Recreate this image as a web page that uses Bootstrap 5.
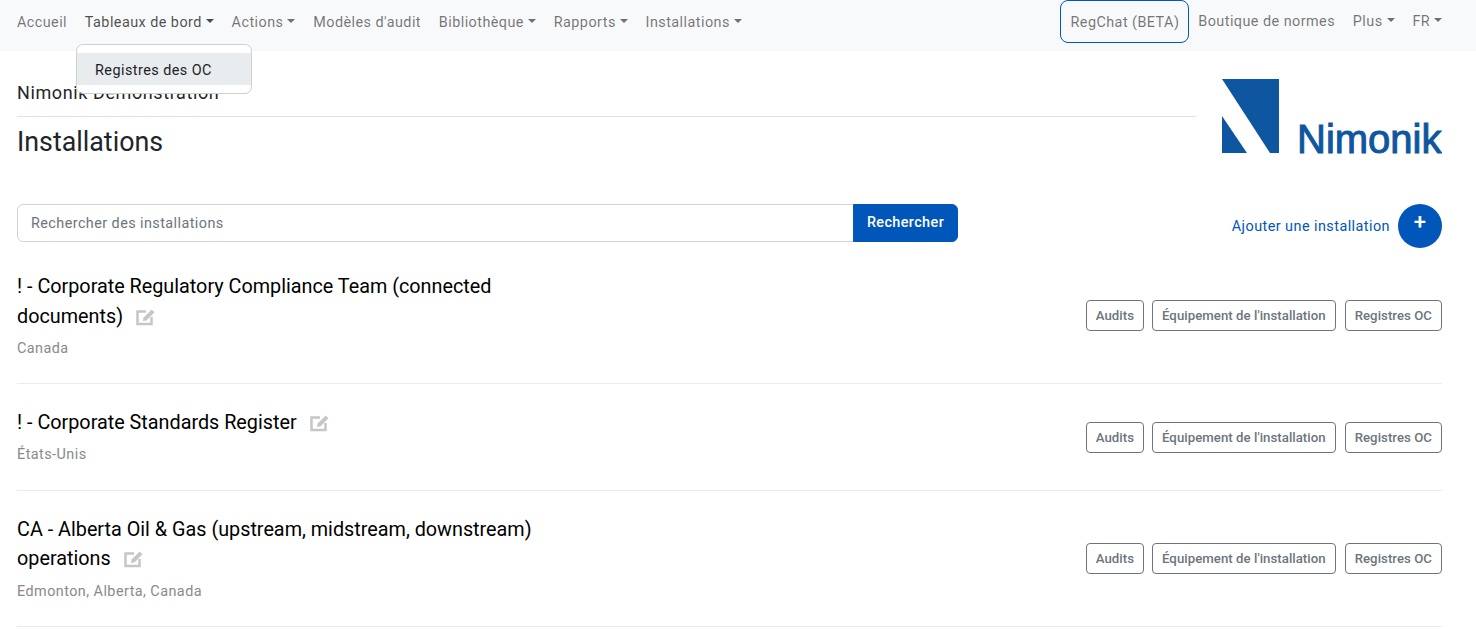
<!DOCTYPE html>
<html lang="fr">
<head>
<meta charset="utf-8">
<title>Installations</title>
<link href="https://cdn.jsdelivr.net/npm/bootstrap@5.3.0/dist/css/bootstrap.min.css" rel="stylesheet">
<style>
html,body{height:629px;overflow:hidden}
body{font-family:Roboto,"Liberation Sans",sans-serif;font-size:14.4px;letter-spacing:.45px;color:#212529;background:#fff}
.topbar{height:51px;padding:0 25px 0 8px;align-items:flex-start}
.topbar .navbar-nav .nav-link{padding:0 8.9px;line-height:46px;color:rgba(0,0,0,.55);font-size:14.4px}
.topbar .navbar-nav .dropdown-toggle.is-open{color:rgba(0,0,0,.7)}
.topbar .dropdown-toggle::after{margin-left:4px}
.topbar .navbar-nav .chat-link{border:1px solid #0056b9;border-radius:8px;height:43px;padding:0 9px;line-height:43px}
.nav-right{margin-left:auto}
.topbar .navbar-nav .shift{line-height:43px}
.topbar .open-menu{position:absolute;top:44px;left:.5px;width:176px;min-width:0;margin:0;padding:8px 0;border-radius:7px;font-size:14.4px;border:1px solid #ced0d2}
.open-menu .dropdown-item{padding:0 17.6px;height:32px;line-height:36px;background:#e9ecef;color:#1e2125}
.page-wrap{padding:0 34px 0 17px}
.head-left{width:1179px}
.org-name{font-size:18px;letter-spacing:.6px;line-height:27px;padding-top:28px;padding-bottom:10px;border-bottom:1px solid #dee2e6}
.page-title{font-size:26.8px;line-height:32px;font-weight:400;letter-spacing:0;margin:9px 0 0}
.logo-box{width:246px;padding-top:28px}
.logo-box svg{display:block;margin-left:auto;margin-bottom:-4px}
.tools{margin-top:45px;height:44px}
.search-box{width:941px;height:38px}
.search-box .form-control{font-size:14.4px;letter-spacing:.43px;height:38px;padding:0 13px;border-color:#ced4da;border-radius:6px 0 0 6px}
.search-box .form-control::placeholder{color:#6c757d}
.search-box .btn{width:105px;height:38px;padding:0;background:#0056b9;border-color:#0056b9;font-size:14.4px;letter-spacing:.4px;font-weight:500;border-radius:0 6px 6px 0}
.add-link{color:#0056b9;text-decoration:none;font-size:14.4px;margin-top:2px}
.add-round{width:44px;height:44px;border-radius:50%;background:#0056b9;color:#fff;margin-left:8px;font-size:22px;font-weight:500;line-height:36px;text-align:center;text-decoration:none;display:block}
.site-row{padding:24px 0 23.3px;border-bottom:1px solid #e9ecef}
.site-row.first-row{padding-bottom:22.3px}
.first-row .act-group{margin-bottom:2px}
.site-main{width:570px}
.site-name{font-size:19.8px;line-height:29.7px;letter-spacing:0;color:#000;font-weight:400;margin:0}
.edit-icon{display:inline-block;vertical-align:-3px;margin-left:13px}
.site-place{color:#8a8a8a;font-size:14.4px;line-height:22px;margin-top:7px}
.act-btn{font-size:13.2px;letter-spacing:.05px;font-weight:500;padding:0 9px;height:31px;line-height:29px;border-radius:4px;color:#6c757d;border-color:#6c757d;background:#fff}
.act-btn:last-child{margin-left:1px}
</style>
</head>
<body>
<nav class="navbar navbar-expand navbar-light bg-light topbar">
  <ul class="navbar-nav">
    <li class="nav-item"><a class="nav-link" href="#">Accueil</a></li>
    <li class="nav-item dropdown position-relative">
      <a class="nav-link dropdown-toggle is-open" href="#">Tableaux de bord</a>
      <div class="dropdown-menu show open-menu"><a class="dropdown-item" href="#">Registres des OC</a></div>
    </li>
    <li class="nav-item dropdown"><a class="nav-link dropdown-toggle" href="#">Actions</a></li>
    <li class="nav-item"><a class="nav-link" href="#">Modèles d'audit</a></li>
    <li class="nav-item dropdown"><a class="nav-link dropdown-toggle" href="#">Bibliothèque</a></li>
    <li class="nav-item dropdown"><a class="nav-link dropdown-toggle" href="#">Rapports</a></li>
    <li class="nav-item dropdown"><a class="nav-link dropdown-toggle" href="#">Installations</a></li>
  </ul>
  <ul class="navbar-nav nav-right">
    <li class="nav-item"><a class="nav-link chat-link" href="#">RegChat (BETA)</a></li>
    <li class="nav-item"><a class="nav-link shift" href="#">Boutique de normes</a></li>
    <li class="nav-item dropdown"><a class="nav-link shift dropdown-toggle" href="#">Plus</a></li>
    <li class="nav-item dropdown"><a class="nav-link shift dropdown-toggle" href="#">FR</a></li>
  </ul>
</nav>

<main class="page-wrap">
  <div class="d-flex">
    <div class="head-left">
      <div class="org-name">Nimonik Demonstration</div>
      <h1 class="page-title">Installations</h1>
    </div>
    <div class="logo-box">
      <svg width="220" height="84" viewBox="0 0 220 84" role="img" aria-label="Nimonik">
        <polygon points="0,0 57,0 57,74 48,74" fill="#0f56a0"/>
        <polygon points="0,37 25,74 0,74" fill="#0f56a0"/>
        <text x="75" y="74" font-family="'Liberation Sans',sans-serif" font-size="40" fill="#0f56a0" stroke="#0f56a0" stroke-width="1" letter-spacing="0">Nimonik</text>
      </svg>
    </div>
  </div>

  <div class="d-flex justify-content-between tools">
    <div class="input-group search-box">
      <input class="form-control" type="text" placeholder="Rechercher des installations">
      <button class="btn btn-primary" type="button">Rechercher</button>
    </div>
    <div class="d-flex align-items-center">
      <a class="add-link" href="#">Ajouter une installation</a>
      <a class="add-round" href="#">+</a>
    </div>
  </div>

  <div class="site-row first-row d-flex justify-content-between align-items-center">
    <div class="site-main">
      <h2 class="site-name">! - Corporate Regulatory Compliance Team (connected documents)<svg class="edit-icon" width="20" height="18" viewBox="0 0 20 18"><path d="M15.500 9v7H1.500V3.500H10" fill="none" stroke="#c6c6c6" stroke-width="2.500"/><path d="M7 13l.6-3.400L15.700 1.500l2.800 2.800-8.100 8.100z" fill="#c6c6c6"/></svg></h2>
      <div class="site-place">Canada</div>
    </div>
    <div class="d-flex gap-2 act-group">
      <a class="btn act-btn" href="#">Audits</a><a class="btn act-btn" href="#">Équipement de l'installation</a><a class="btn act-btn" href="#">Registres OC</a>
    </div>
  </div>

  <div class="site-row d-flex justify-content-between align-items-center">
    <div class="site-main">
      <h2 class="site-name">! - Corporate Standards Register<svg class="edit-icon" width="20" height="18" viewBox="0 0 20 18"><path d="M15.500 9v7H1.500V3.500H10" fill="none" stroke="#c6c6c6" stroke-width="2.500"/><path d="M7 13l.6-3.400L15.700 1.500l2.800 2.800-8.100 8.100z" fill="#c6c6c6"/></svg></h2>
      <div class="site-place">États-Unis</div>
    </div>
    <div class="d-flex gap-2 act-group">
      <a class="btn act-btn" href="#">Audits</a><a class="btn act-btn" href="#">Équipement de l'installation</a><a class="btn act-btn" href="#">Registres OC</a>
    </div>
  </div>

  <div class="site-row d-flex justify-content-between align-items-center">
    <div class="site-main">
      <h2 class="site-name">CA - Alberta Oil &amp; Gas (upstream, midstream, downstream) operations<svg class="edit-icon" width="20" height="18" viewBox="0 0 20 18"><path d="M15.500 9v7H1.500V3.500H10" fill="none" stroke="#c6c6c6" stroke-width="2.500"/><path d="M7 13l.6-3.400L15.700 1.500l2.800 2.800-8.100 8.100z" fill="#c6c6c6"/></svg></h2>
      <div class="site-place">Edmonton, Alberta, Canada</div>
    </div>
    <div class="d-flex gap-2 act-group">
      <a class="btn act-btn" href="#">Audits</a><a class="btn act-btn" href="#">Équipement de l'installation</a><a class="btn act-btn" href="#">Registres OC</a>
    </div>
  </div>
</main>
<script src="https://cdn.jsdelivr.net/npm/bootstrap@5.3.0/dist/js/bootstrap.bundle.min.js"></script>
</body>
</html>
